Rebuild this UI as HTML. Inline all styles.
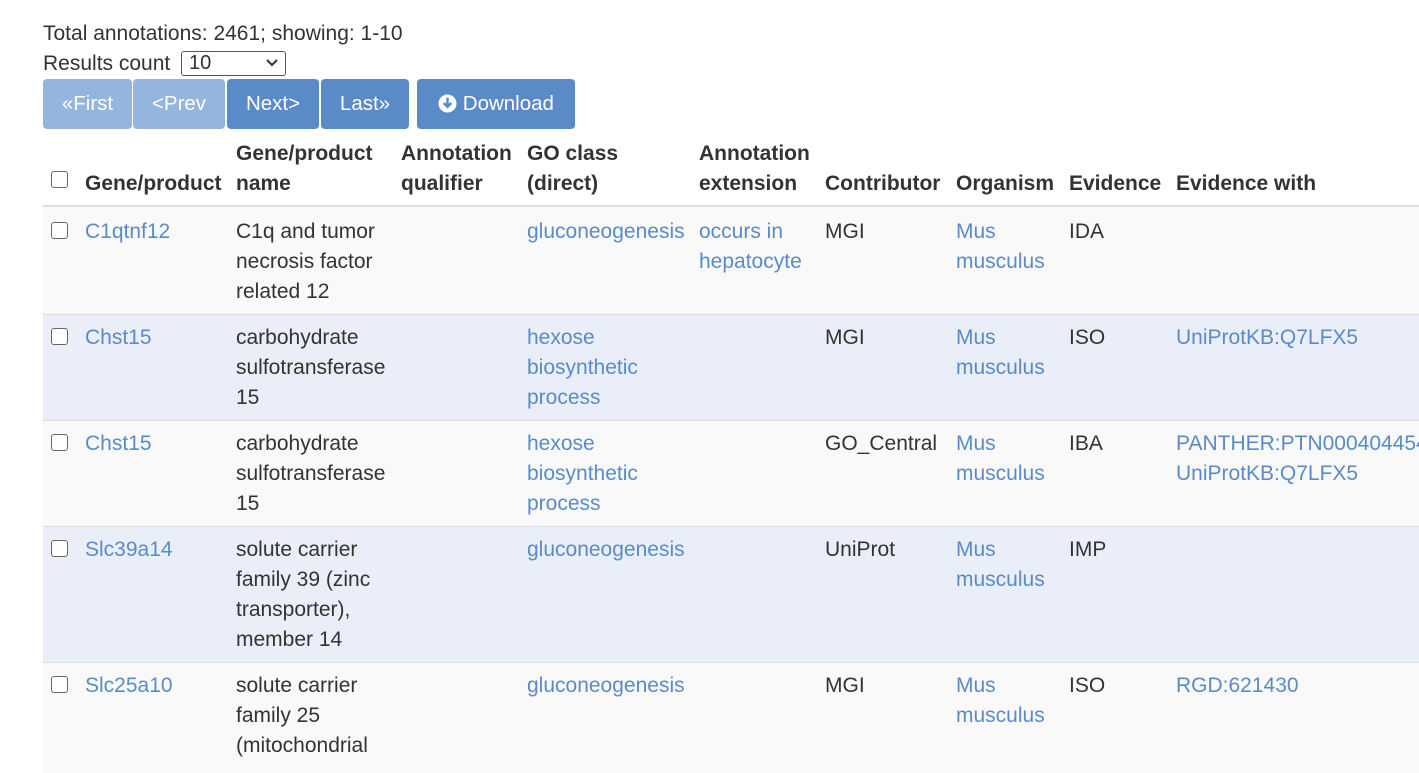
<!DOCTYPE html>
<html><head><meta charset="utf-8"><style>
body{margin:0;width:1419px;height:766px;overflow:hidden;background:#fff;font-family:"Liberation Sans",Arial,Helvetica,sans-serif;font-size:21px;color:#333;position:relative}
.a{position:absolute;line-height:30px;white-space:nowrap;margin-top:1px}
.l{color:#5a8bc8}
.b{font-weight:bold}
.btn{position:absolute;top:79px;height:50px;line-height:50px;color:#fff;text-align:center;border-radius:4px;background:#5b8ac8;font-size:20.5px}
.dis{background:#94b5dd}
.row{position:absolute;left:43px;width:1376px;border-top:1px solid #ddd}
.cb{position:absolute;left:51px;width:15px;height:15px;border:1.5px solid #666;border-radius:3px;background:#fff}
</style></head><body>
<div class="a" style="left:43px;top:18px">Total annotations: 2461; showing: 1-10</div>
<div class="a" style="left:43px;top:48px">Results count</div>
<div style="position:absolute;left:181px;top:51px;width:103px;height:23px;border:1px solid #555;border-radius:3px;line-height:23px;font-size:20px;box-sizing:content-box"><span style="padding-left:7px">10</span><svg style="position:absolute;right:7px;top:7px" width="12" height="8" viewBox="0 0 12 8"><path d="M1 1l5 5 5-5" stroke="#333" stroke-width="2" fill="none"/></svg></div>
<div class="btn dis" style="left:43px;width:89px">«First</div>
<div class="btn dis" style="left:133px;width:92px">&lt;Prev</div>
<div class="btn" style="left:227px;width:92px">Next&gt;</div>
<div class="btn" style="left:321px;width:88px">Last»</div>
<div class="btn" style="left:417px;width:158px"><svg style="vertical-align:-3px" width="19" height="19" viewBox="0 0 20 20"><circle cx="10" cy="10" r="9.5" fill="#fff"/><path d="M10 4v9M6 9.5l4 4 4-4" stroke="#5b8ac8" stroke-width="2.6" fill="none"/></svg> Download</div>

<div class="cb" style="top:171px"></div>
<div class="a b" style="left:85px;top:168px">Gene/product</div>
<div class="a b" style="left:236px;top:138px">Gene/product<br>name</div>
<div class="a b" style="left:401px;top:138px">Annotation<br>qualifier</div>
<div class="a b" style="left:527px;top:138px">GO class<br>(direct)</div>
<div class="a b" style="left:699px;top:138px">Annotation<br>extension</div>
<div class="a b" style="left:825px;top:168px">Contributor</div>
<div class="a b" style="left:956px;top:168px">Organism</div>
<div class="a b" style="left:1069px;top:168px">Evidence</div>
<div class="a b" style="left:1176px;top:168px">Evidence with</div>
<div style="position:absolute;left:43px;top:205px;width:1376px;height:3px;background:#ddd"></div>

<div class="row" style="top:207px;height:107px;background:#f9f9f9;border:0"></div>
<div class="row" style="top:314px;height:106px;background:#eaeef8"></div>
<div class="row" style="top:420px;height:106px;background:#f9f9f9"></div>
<div class="row" style="top:526px;height:136px;background:#eaeef8"></div>
<div class="row" style="top:662px;height:110px;background:#f9f9f9"></div>

<div class="cb" style="top:222px"></div>
<div class="a l" style="left:85px;top:216px">C1qtnf12</div>
<div class="a" style="left:236px;top:216px">C1q and tumor<br>necrosis factor<br>related 12</div>
<div class="a l" style="left:527px;top:216px">gluconeogenesis</div>
<div class="a l" style="left:699px;top:216px">occurs in<br>hepatocyte</div>
<div class="a" style="left:825px;top:216px">MGI</div>
<div class="a l" style="left:956px;top:216px">Mus<br>musculus</div>
<div class="a" style="left:1069px;top:216px">IDA</div>

<div class="cb" style="top:328px"></div>
<div class="a l" style="left:85px;top:322px">Chst15</div>
<div class="a" style="left:236px;top:322px">carbohydrate<br>sulfotransferase<br>15</div>
<div class="a l" style="left:527px;top:322px">hexose<br>biosynthetic<br>process</div>
<div class="a" style="left:825px;top:322px">MGI</div>
<div class="a l" style="left:956px;top:322px">Mus<br>musculus</div>
<div class="a" style="left:1069px;top:322px">ISO</div>
<div class="a l" style="left:1176px;top:322px">UniProtKB:Q7LFX5</div>

<div class="cb" style="top:434px"></div>
<div class="a l" style="left:85px;top:428px">Chst15</div>
<div class="a" style="left:236px;top:428px">carbohydrate<br>sulfotransferase<br>15</div>
<div class="a l" style="left:527px;top:428px">hexose<br>biosynthetic<br>process</div>
<div class="a" style="left:825px;top:428px">GO_Central</div>
<div class="a l" style="left:956px;top:428px">Mus<br>musculus</div>
<div class="a" style="left:1069px;top:428px">IBA</div>
<div class="a l" style="left:1176px;top:428px">PANTHER:PTN000404454<br>UniProtKB:Q7LFX5</div>

<div class="cb" style="top:540px"></div>
<div class="a l" style="left:85px;top:534px">Slc39a14</div>
<div class="a" style="left:236px;top:534px">solute carrier<br>family 39 (zinc<br>transporter),<br>member 14</div>
<div class="a l" style="left:527px;top:534px">gluconeogenesis</div>
<div class="a" style="left:825px;top:534px">UniProt</div>
<div class="a l" style="left:956px;top:534px">Mus<br>musculus</div>
<div class="a" style="left:1069px;top:534px">IMP</div>

<div class="cb" style="top:676px"></div>
<div class="a l" style="left:85px;top:670px">Slc25a10</div>
<div class="a" style="left:236px;top:670px">solute carrier<br>family 25<br>(mitochondrial</div>
<div class="a l" style="left:527px;top:670px">gluconeogenesis</div>
<div class="a" style="left:825px;top:670px">MGI</div>
<div class="a l" style="left:956px;top:670px">Mus<br>musculus</div>
<div class="a" style="left:1069px;top:670px">ISO</div>
<div class="a l" style="left:1176px;top:670px">RGD:621430</div>
</body></html>
